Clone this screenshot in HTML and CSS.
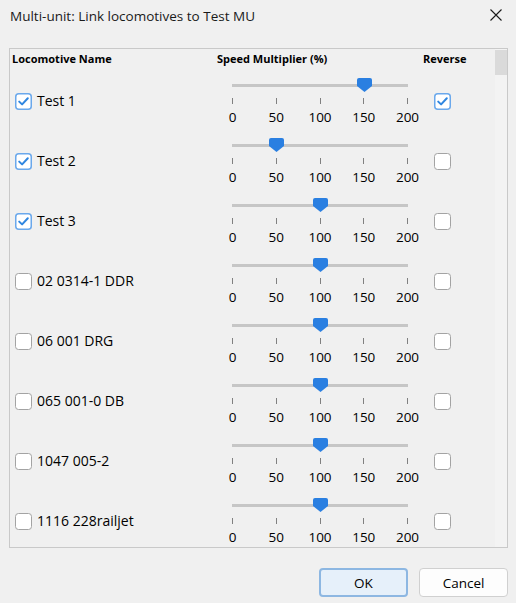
FILE: index.html
```html
<!DOCTYPE html>
<html>
<head>
<meta charset="utf-8">
<link rel="stylesheet" href="styles.css">
</head>
<body>
<div class="dialog">
  <div class="titlebar">
    <span class="title">Multi-unit: Link locomotives to Test MU</span>
    <svg class="close" width="12" height="12" viewBox="0 0 12 12"><path d="M0.5 0.5 L11.5 11.5 M11.5 0.5 L0.5 11.5" stroke="#1a1a1a" stroke-width="1.1" fill="none"/></svg>
  </div>
  <div class="panel">
    <div class="list">
      <div class="header">
        <span class="h-name">Locomotive Name</span>
        <span class="h-speed">Speed Multiplier (%)</span>
        <span class="h-rev">Reverse</span>
      </div>
      <div id="rows"></div>
    </div>
    <div class="scrollbar"><div class="thumb"></div></div>
  </div>
  <div class="buttons">
    <button class="btn btn-default">OK</button>
    <button class="btn">Cancel</button>
  </div>
</div>
<script>
var data = [
  ["Test 1", true, 150, true],
  ["Test 2", true, 50, false],
  ["Test 3", true, 100, false],
  ["02 0314-1 DDR", false, 100, false],
  ["06 001 DRG", false, 100, false],
  ["065 001-0 DB", false, 100, false],
  ["1047 005-2", false, 100, false],
  ["1116 228railjet", false, 100, false]
];
var checked = '<svg class="cb" width="17" height="17" viewBox="0 0 17 17"><rect x="0.75" y="0.75" width="15.5" height="15.5" rx="3" fill="#fff" stroke="#6aa8ec" stroke-width="1.5"/><path d="M4.2 8.6 L7.1 11.4 L12.8 5.2" stroke="#2f86e0" stroke-width="2" fill="none" stroke-linecap="round" stroke-linejoin="round"/></svg>';
var unchecked = '<svg class="cb" width="17" height="17" viewBox="0 0 17 17"><rect x="0.5" y="0.5" width="16" height="16" rx="3" fill="#fff" stroke="#a3a3a3" stroke-width="1"/></svg>';
var html = "";
data.forEach(function (d) {
  var left = (d[2] / 200 * 176 - 7.5).toFixed(1);
  html += '<div class="row">' +
    '<div class="c-name">' + (d[1] ? checked : unchecked) + '<span>' + d[0] + '</span></div>' +
    '<div class="c-speed"><div class="slider">' +
      '<div class="track-area"><div class="track"></div>' +
      '<svg class="knob" style="left:' + left + 'px" width="15" height="14" viewBox="0 0 15 14"><path d="M2 0 H13 Q15 0 15 2 V8 L7.5 14 L0 8 V2 Q0 0 2 0 Z" fill="#2a7fe1"/></svg></div>' +
      '<div class="ticks"><i></i><i></i><i></i><i></i><i></i></div>' +
      '<div class="labels"><b>0</b><b>50</b><b>100</b><b>150</b><b>200</b></div>' +
    '</div></div>' +
    '<div class="c-rev">' + (d[3] ? checked : unchecked) + '</div>' +
  '</div>';
});
document.getElementById("rows").innerHTML = html;
</script>
</body>
</html>
```

FILE: styles.css
```css
html, body {
  margin: 0;
  padding: 0;
}
body {
  background: #f0f0f0;
  font-family: "Open Sans", "Noto Sans", sans-serif;
  font-size: 13.5px;
  color: #000;
}
.dialog {
  width: 516px;
  height: 603px;
  display: flex;
  flex-direction: column;
}
.titlebar {
  height: 32px;
  box-sizing: border-box;
  padding: 6px 14px 0 10px;
  display: flex;
  justify-content: space-between;
  align-items: flex-start;
  line-height: 20px;
  color: #1a1a1a;
}
.close {
  margin-top: 3px;
}
.panel {
  margin: 16px 0 0 9px;
  width: 499px;
  height: 500px;
  box-sizing: border-box;
  border: 1px solid #c9c9c9;
  display: flex;
  overflow: hidden;
}
.list {
  flex: 1;
  overflow: hidden;
}
.scrollbar {
  width: 12px;
  background: #f3f3f3;
}
.scrollbar .thumb {
  height: 25px;
  background: #dadada;
  margin-top: 1px;
}
.header {
  height: 22px;
  box-sizing: border-box;
  padding-top: 2px;
  display: grid;
  grid-template-columns: 205px 206px 1fr;
  padding-left: 2px;
  font-weight: 700;
  font-size: 11px;
  line-height: 15px;
}
.row {
  height: 60px;
  display: grid;
  grid-template-columns: 207px 206px 1fr;
}
.c-name {
  display: flex;
  align-items: center;
  padding-left: 5px;
  gap: 5px;
  font-size: 14px;
  line-height: 18px;
}
.cb {
  display: block;
  flex: none;
}
.c-rev {
  display: flex;
  align-items: center;
  padding-left: 11px;
}
.c-speed {
  padding: 7px 0 0 15px;
}
.slider {
  width: 176px;
}
.track-area {
  height: 14px;
  position: relative;
}
.track {
  position: relative;
  top: 6px;
  height: 3px;
  background: #c6c6c6;
}
.knob {
  position: absolute;
  top: 0;
  display: block;
}
.ticks {
  margin-top: 6px;
  height: 6px;
  display: flex;
  justify-content: space-between;
}
.ticks i {
  width: 1px;
  height: 6px;
  background: #808080;
}
.labels {
  margin-top: 5px;
  height: 16px;
  line-height: 16px;
  display: flex;
  justify-content: space-between;
  padding: 0 0.5px;
}
.labels b {
  font-weight: 400;
  width: 0;
  display: flex;
  justify-content: center;
  white-space: nowrap;
}
.buttons {
  margin-top: 20px;
  display: flex;
  justify-content: flex-end;
  gap: 11px;
  padding-right: 8px;
}
.btn {
  width: 89px;
  height: 29px;
  box-sizing: border-box;
  border: 1px solid #d0d0d0;
  border-radius: 4px;
  background: #fdfdfd;
  font-family: "Open Sans", "Noto Sans", sans-serif;
  font-size: 13.5px;
  color: #000;
  padding: 0;
}
.btn-default {
  border: 2px solid #8db7e2;
  background: #e6f0fa;
}
```
